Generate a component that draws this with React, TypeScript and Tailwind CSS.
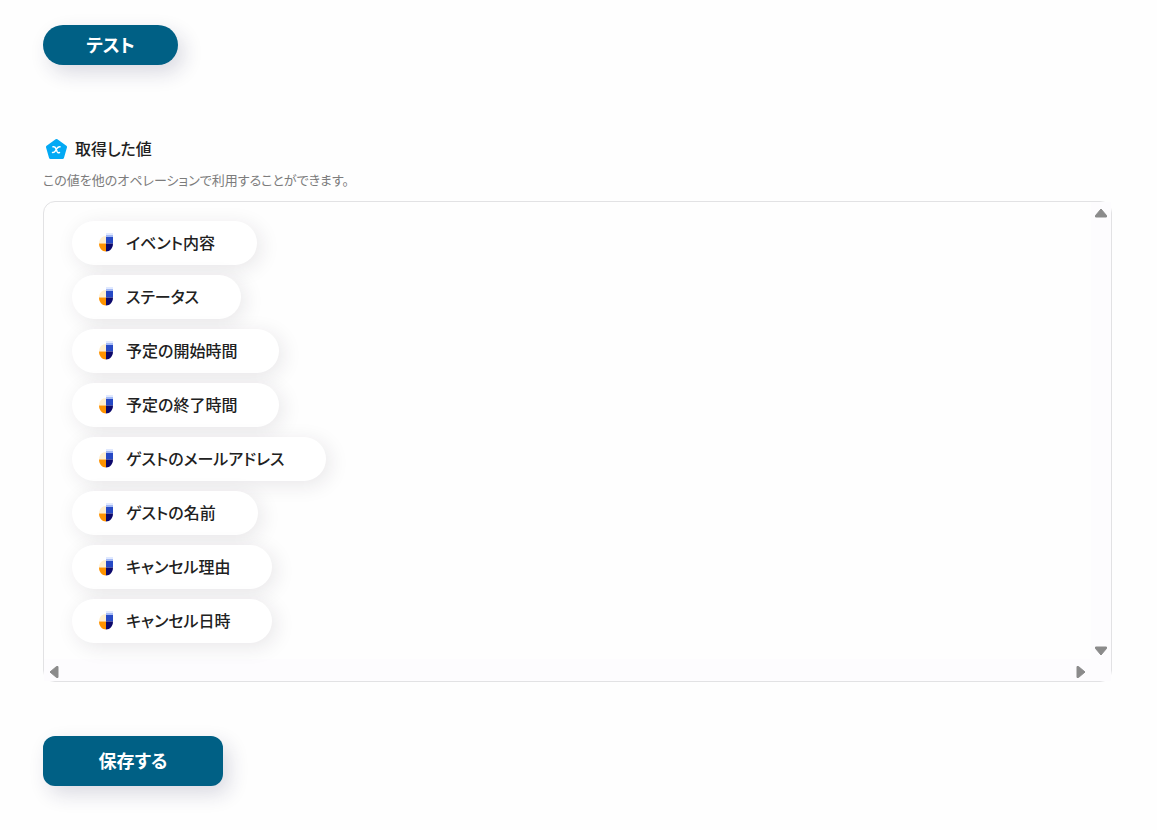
import React from 'react';

const values = [
  'イベント内容',
  'ステータス',
  '予定の開始時間',
  '予定の終了時間',
  'ゲストのメールアドレス',
  'ゲストの名前',
  'キャンセル理由',
  'キャンセル日時',
];

const VariableIcon: React.FC = () => (
  <svg className="h-6 w-6" viewBox="-1 -1 24 24" aria-hidden="true">
    <path
      d="M12.500 3.500 21.500 10 18.500 20.500H6.500L3.500 10Z"
      fill="#03a9f4"
      stroke="#03a9f4"
      strokeWidth="3"
      strokeLinejoin="round"
    />
    <path
      d="M9 9.800c1.700-.3 2.200.2 2.800 1.600l1.400 3.400c.4.900 1.200 1.200 2.300.7M16 9.800c-1.600-.2-2.400.7-3.200 1.900l-1.400 2.200c-.8 1.300-1.500 1.900-2.900 1.600"
      fill="none"
      stroke="#fff"
      strokeWidth="1.5"
      strokeLinecap="round"
    />
  </svg>
);

const ServiceIcon: React.FC = () => (
  <svg className="h-5 w-4" viewBox="0 0 16 20" aria-hidden="true">
    <path d="M8 3v7.500H1C1 6 4 3 8 3Z" fill="#ffefcf" />
    <path d="M1 10.500h7v8c-4 0-7-3.500-7-8Z" fill="#ff9300" />
    <path d="M8 4h7v6.500H8Z" fill="#2649c5" />
    <path d="M8 0h7v2H8Z" fill="#e0e9ff" />
    <path d="M8 2h7v2H8Z" fill="#a3b9f5" />
    <path d="M8 10.500h7c0 4.500-3 8-7 8Z" fill="#0c086b" />
  </svg>
);

// points up by default, rotated for the other directions
const ScrollButton: React.FC<{ label: string; className?: string }> = ({ label, className = '' }) => (
  <button type="button" aria-label={label} className={className}>
    <svg className="h-4 w-4" viewBox="0 0 16 16" aria-hidden="true">
      <path d="M8 4 13.500 10.500V12H2.500V10.500Z" fill="#8b8b8b" stroke="#8b8b8b" strokeWidth="1" strokeLinejoin="round" />
    </svg>
  </button>
);

const App: React.FC = () => {
  return (
    <main className="min-h-screen bg-[#fefefe] pl-[43px] pr-[45px] pt-[25px] pb-11 text-[#212121] font-['Noto_Sans_CJK_JP',sans-serif] [font-feature-settings:'palt']">
      <button
        type="button"
        className="block h-10 min-w-[135px] rounded-full bg-[#006085] px-10 pb-0.5 text-lg font-bold text-white shadow-[6px_8px_20px_rgba(30,30,80,0.16)]"
      >
        テスト
      </button>

      <section className="mt-[71px]">
        <h2 className="flex items-center gap-2 text-base leading-6 font-medium">
          <VariableIcon />
          取得した値
        </h2>
        <p className="mt-2.5 text-[13px] leading-5 text-[#7c7c7c]">
          この値を他のオペレーションで利用することができます。
        </p>

        <div className="mt-[11px] rounded-xl border border-[#e2e2e4]">
          <div className="flex">
            <ul className="flex grow flex-col items-start gap-2.5 pt-[19px] pb-4 pl-7">
              {values.map((value) => (
                <li key={value}>
                  <button
                    type="button"
                    className="flex h-11 items-center gap-3 rounded-full bg-white pr-[42px] pl-[26px] text-base font-medium shadow-[4px_4px_20px_rgba(40,30,50,0.10)]"
                  >
                    <ServiceIcon />
                    <span className="pb-0.5">{value}</span>
                  </button>
                </li>
              ))}
            </ul>
            <div className="flex w-5 flex-col items-center justify-between bg-[#fdfcfe] pt-[3px]">
              <ScrollButton label="上へスクロール" />
              <ScrollButton label="下へスクロール" className="rotate-180" />
            </div>
          </div>
          <div className="flex h-[22px] items-center justify-between bg-[#fdfcfe] pt-1 pr-[22px] pl-0.5">
            <ScrollButton label="左へスクロール" className="-rotate-90" />
            <ScrollButton label="右へスクロール" className="rotate-90" />
          </div>
        </div>
      </section>

      <button
        type="button"
        className="mt-[54px] block h-[50px] min-w-[180px] rounded-xl bg-[#006085] px-10 pb-0.5 text-lg font-bold text-white shadow-[6px_8px_20px_rgba(30,30,80,0.16)]"
      >
        保存する
      </button>
    </main>
  );
};

export default App;
